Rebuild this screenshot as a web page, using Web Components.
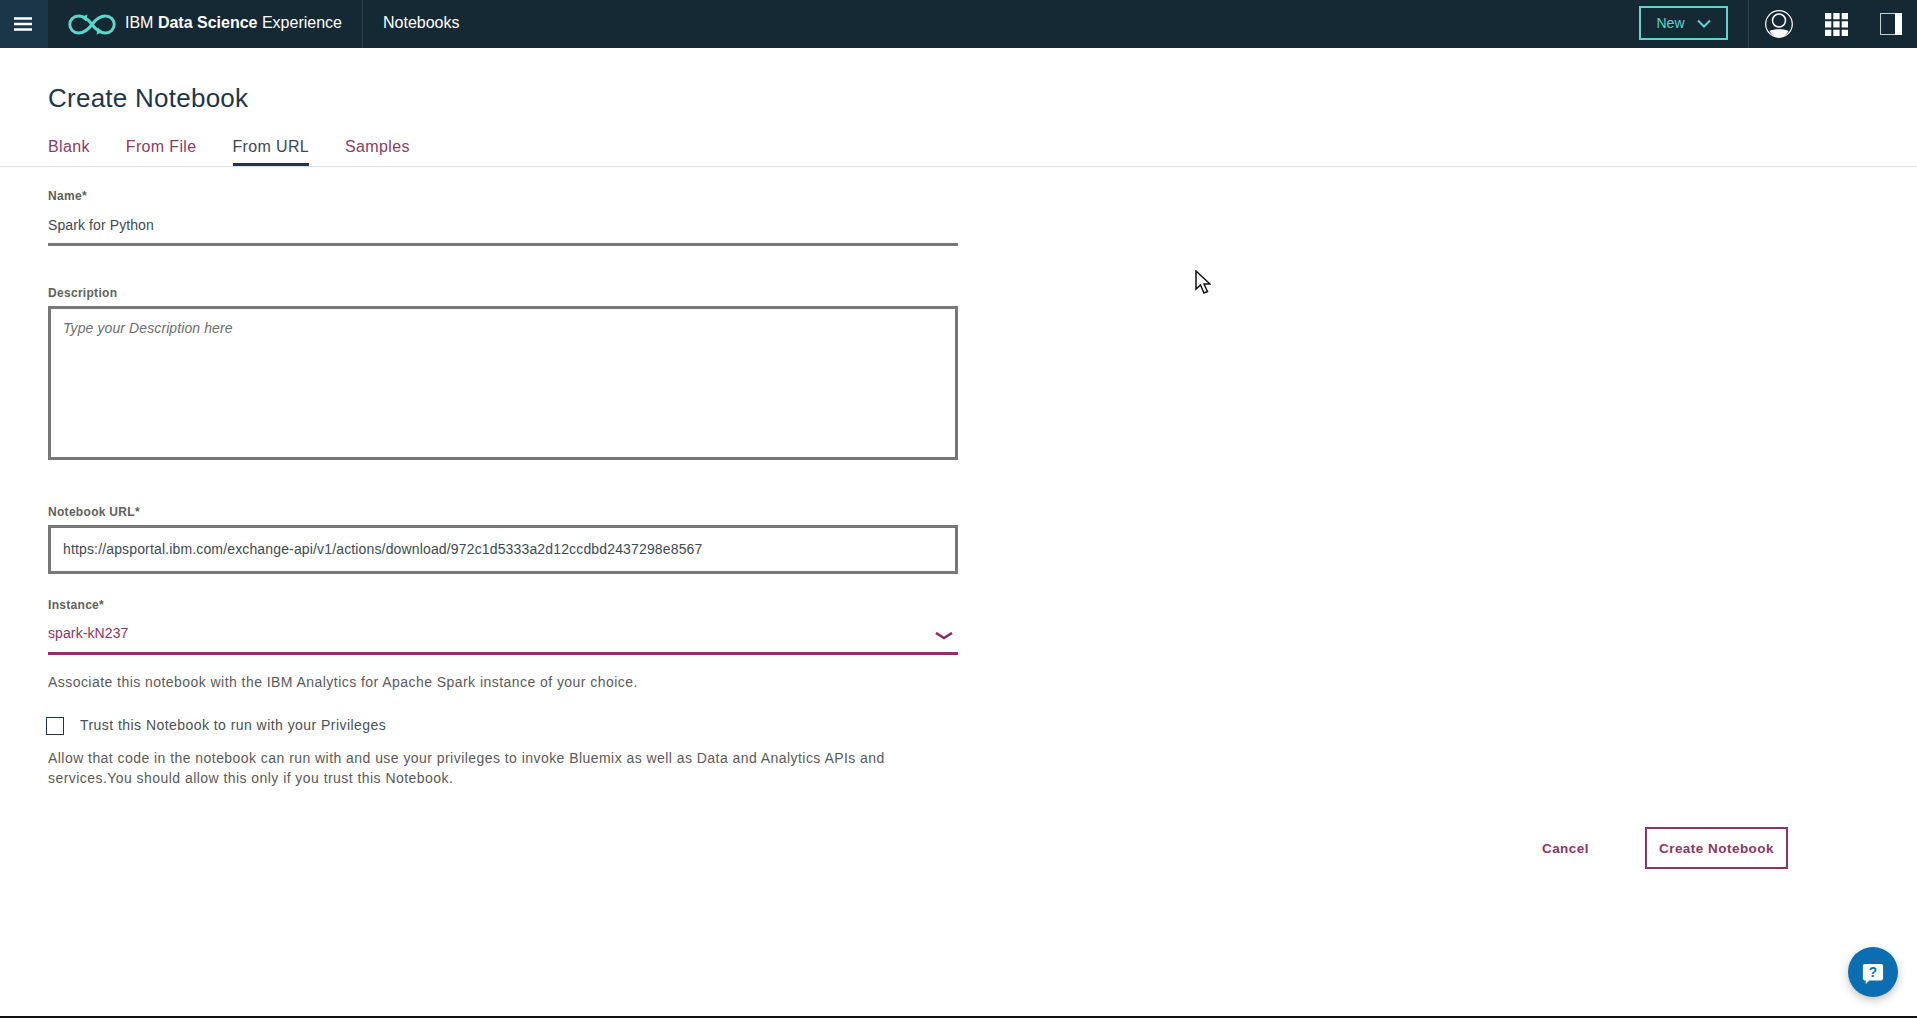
<!DOCTYPE html>
<html lang="en">
<head>
<meta charset="utf-8">
<title>Create Notebook</title>
<style>
  html, body { margin: 0; height: 100%; }
  body {
    display: flex;
    flex-direction: column;
    height: 1018px;
    overflow: hidden;
    background: #fff;
    font-family: "Liberation Sans", Arial, sans-serif;
    color: #5a5a5a;
  }
  dsx-page { flex: 1; }
</style>
</head>
<body>
<dsx-header></dsx-header>
<dsx-page>
  <dsx-tabs title="Create Notebook"></dsx-tabs>
  <dsx-form></dsx-form>
</dsx-page>
<dsx-cursor></dsx-cursor>
<dsx-help></dsx-help>

<script>
(function(){

  class DsxHeader extends HTMLElement {
    constructor() {
      super();
      this.attachShadow({ mode: "open" }).innerHTML = `
      <style>
        :host { display: flex; align-items: stretch; height: 48px; flex: none; background: #152935; color: #fff; font-size: 16px; }
        .burger { width: 48px; box-sizing: border-box; padding: 0 2px 1px 0; background: #1c3649; display: flex; align-items: center; justify-content: center; }
        .brand { display: flex; align-items: center; gap: 9px; padding: 0 0 0 20px; border-right: 1px solid #2b3f4b; width: 315px; box-sizing: border-box; }
        .brand svg { flex: none; }
        .brand span { white-space: nowrap; font-size: 16px; padding-bottom: 2px; }
        .section { display: flex; align-items: center; padding: 0 0 2px 20px; flex: 1; font-size: 16px; }
        .new { align-self: flex-start; margin-top: 6px; width: 89px; height: 34px; box-sizing: border-box; border: 2px solid #5dd5c8; color: #5dd5c8; display: flex; align-items: center; justify-content: center; gap: 12px; font-size: 14px; }
        .tools { display: flex; align-items: center; margin-left: 20px; border-left: 1px solid #2b3f4b; padding-left: 16px; width: 169px; box-sizing: border-box; gap: 32px; }
        .tools svg { flex: none; }
      </style>
      <div class="burger">
        <svg width="18" height="14" viewBox="0 0 18 14"><path d="M0 1.500h18M0 7h18M0 12.500h18" stroke="#fff" stroke-width="2.600"/></svg>
      </div>
      <div class="brand">
        <svg width="48" height="21" viewBox="0 0 48 21" fill="none" stroke="#5dd5c8" stroke-width="3">
          <path d="M24 10.500C20 5 16 2 10.500 2 5.500 2 1.800 5.800 1.800 10.500S5.500 19 10.500 19C16 19 20 16 24 10.500 28 5 32 2 37.500 2 42.500 2 46.200 5.800 46.200 10.500S42.500 19 37.500 19C32 19 28 16 24 10.500z"/>
          <path d="M13 3 19.500 .5 18 7.500zM35 18 28.500 20.500 30 13.500z" fill="#5dd5c8" stroke="none"/>
        </svg>
        <span>IBM <b>Data Science</b> Experience</span>
      </div>
      <div class="section">Notebooks</div>
      <div class="new">New
        <svg width="14" height="9" viewBox="0 0 14 9" fill="none" stroke="#5dd5c8" stroke-width="2"><path d="M1 1.500 7 7.500l6-6"/></svg>
      </div>
      <div class="tools">
        <svg width="28" height="28" viewBox="0 0 28 28">
          <circle cx="14" cy="14" r="13.300" fill="none" stroke="#fff" stroke-width="1.200"/>
          <path d="M4.500 21C8 18.500 20 18.500 23.500 21 21 25.500 17.500 27.300 14 27.300S7 25.500 4.500 21z" fill="#fff"/>
          <circle cx="14" cy="10.500" r="6.500" fill="none" stroke="#fff" stroke-width="1.500"/>
        </svg>
        <svg width="23" height="23" viewBox="0 0 23 23" fill="#fff">
          <path d="M0 0h6.300v6.300H0zM8.300 0h6.300v6.300H8.300zM16.700 0H23v6.300h-6.300zM0 8.300h6.300v6.300H0zM8.300 8.300h6.300v6.300H8.300zM16.700 8.300H23v6.300h-6.300zM0 16.700h6.300V23H0zM8.300 16.700h6.300V23H8.300zM16.700 16.700H23V23h-6.300z"/>
        </svg>
        <svg width="22" height="22" viewBox="0 0 22 22">
          <rect x=".5" y=".5" width="21" height="21" fill="none" stroke="#c8cdd0"/>
          <rect x="15" y="0" width="7" height="22" fill="#fff"/>
        </svg>
      </div>`;
    }
  }

  class DsxTabs extends HTMLElement {
    constructor() {
      super();
      this.attachShadow({ mode: "open" }).innerHTML = `
      <style>
        :host { display: block; padding-top: 34px; border-bottom: 1px solid #dfdfdf; }
        h1 { margin: 0 0 0 48px; font-weight: 400; font-size: 26px; line-height: 32px; letter-spacing: .25px; color: #1d3649; }
        nav { display: flex; gap: 36px; margin: 23px 0 0 48px; font-size: 16px; letter-spacing: .35px; }
        a { color: #8c3a68; line-height: 20px; padding-bottom: 6px; height: 20px; }
        a.on { color: #3a4a55; border-bottom: 3px solid #1d3649; }
      </style>
      <h1></h1>
      <nav>
        <a>Blank</a>
        <a>From File</a>
        <a class="on">From URL</a>
        <a>Samples</a>
      </nav>`;
      this.shadowRoot.querySelector("h1").textContent = this.getAttribute("title");
    }
  }

  class DsxField extends HTMLElement {
    constructor() {
      super();
      this.attachShadow({ mode: "open" }).innerHTML = `
      <style>
        :host { display: block; width: 910px; }
        label { display: block; font-size: 12px; line-height: 14px; font-weight: 700; letter-spacing: .3px; color: #5f5f5f; }
        .box { font-size: 14px; letter-spacing: .1px; color: #3d4a53; box-sizing: border-box; }
        :host([kind="line"]) .box { border-bottom: 3px solid #777; height: 38px; line-height: 34px; margin-top: 5px; }
        :host([kind="area"]) .box { border: 3px solid #777; height: 154px; margin-top: 6px; padding: 11px 12px; font-style: italic; color: #6e6e6e; line-height: 16px; }
        :host([kind="input"]) .box { border: 3px solid #777; height: 49px; margin-top: 6px; padding: 0 12px; line-height: 43px; letter-spacing: .15px; }
        :host([kind="select"]) .box { border-bottom: 3px solid #9b2a6a; height: 39px; margin-top: 4px; padding-bottom: 2px; color: #8c3566; display: flex; justify-content: space-between; align-items: center; }
        ::slotted(svg) { margin: 6px 5px 0 0; }
      </style>
      <label></label>
      <div class="box"><slot></slot></div>`;
      this.shadowRoot.querySelector("label").textContent = this.getAttribute("label");
    }
  }

  class DsxForm extends HTMLElement {
    constructor() {
      super();
      this.attachShadow({ mode: "open" }).innerHTML = `
      <style>
        :host { display: block; padding: 22px 48px 0; }
        .name { margin-bottom: 40px; }
        .desc { margin-bottom: 45px; }
        .url { margin-bottom: 24px; }
        p { margin: 0; font-size: 14px; letter-spacing: .45px; color: #5a5a5a; line-height: 20px; }
        .assoc { margin-top: 17px; }
        .trust { display: flex; align-items: center; gap: 16px; margin-top: 22px; height: 24px; font-size: 14px; letter-spacing: .45px; color: #4a4f53; }
        .trust span:last-child { margin-top: -3px; }
        .check { width: 18px; height: 18px; box-sizing: border-box; border: 1px solid #1d3649; margin-left: -2px; flex: none; }
        .allow { width: 860px; margin-top: 10px; }
        .actions { display: flex; justify-content: flex-end; align-items: center; gap: 56px; margin: 39px 81px 0 0; font-size: 13.500px; font-weight: 700; letter-spacing: .47px; color: #8c3566; }
        .primary { width: 143px; height: 42px; box-sizing: border-box; border: 2px solid #8c3566; display: flex; align-items: center; justify-content: center; }
      </style>
      <dsx-field class="name" kind="line" label="Name*">Spark for Python</dsx-field>
      <dsx-field class="desc" kind="area" label="Description">Type your Description here</dsx-field>
      <dsx-field class="url" kind="input" label="Notebook URL*">https://apsportal.ibm.com/exchange-api/v1/actions/download/972c1d5333a2d12ccdbd2437298e8567</dsx-field>
      <dsx-field kind="select" label="Instance*">spark-kN237<svg width="18" height="8" viewBox="0 0 18 8" fill="none" stroke="#8c2a66" stroke-width="2.600"><path d="M1 1l8 5 8-5"/></svg></dsx-field>
      <p class="assoc">Associate this notebook with the IBM Analytics for Apache Spark instance of your choice.</p>
      <div class="trust"><span class="check"></span><span>Trust this Notebook to run with your Privileges</span></div>
      <p class="allow">Allow that code in the notebook can run with and use your privileges to invoke Bluemix as well as Data and Analytics APIs and services.You should allow this only if you trust this Notebook.</p>
      <div class="actions"><span>Cancel</span><span class="primary">Create Notebook</span></div>`;
    }
  }

  class DsxCursor extends HTMLElement {
    constructor() {
      super();
      this.attachShadow({ mode: "open" }).innerHTML = `
      <style>
        :host { position: absolute; left: 1195px; top: 270px; width: 16px; height: 25px; }
      </style>
      <svg width="16" height="25" viewBox="0 0 16 25">
        <path d="M1 1v18l4.500-4 3.500 8 3.500-1.500L9 14h6z" fill="#fff" stroke="#111" stroke-width="1.500" stroke-linejoin="miter"/>
      </svg>`;
    }
  }

  class DsxHelp extends HTMLElement {
    constructor() {
      super();
      this.attachShadow({ mode: "open" }).innerHTML = `
      <style>
        :host { position: absolute; left: 1848px; top: 947px; width: 50px; height: 50px; border-radius: 50%; background: #0a6eb0; box-shadow: 0 3px 8px rgba(0,0,0,.25); display: flex; align-items: center; justify-content: center; }
        svg { display: block; margin-top: 3px; }
        text { font: 700 15px "Liberation Sans", sans-serif; fill: #0a6eb0; }
      </style>
      <svg width="22" height="22" viewBox="0 0 24 24">
        <path d="M3 1h18a2 2 0 0 1 2 2v14a2 2 0 0 1-2 2H8l-4 4v-4H3a2 2 0 0 1-2-2V3a2 2 0 0 1 2-2z" fill="#fff"/>
        <text x="12" y="15" text-anchor="middle">?</text>
      </svg>`;
    }
  }

  class DsxPage extends HTMLElement {
    constructor() {
      super();
      this.attachShadow({ mode: "open" }).innerHTML = `
      <style>
        :host { display: block; border-bottom: 2px solid #111; }
      </style>
      <slot></slot>`;
    }
  }

  customElements.define("dsx-header", DsxHeader);
  customElements.define("dsx-tabs", DsxTabs);
  customElements.define("dsx-field", DsxField);
  customElements.define("dsx-form", DsxForm);
  customElements.define("dsx-cursor", DsxCursor);
  customElements.define("dsx-help", DsxHelp);
  customElements.define("dsx-page", DsxPage);

})();
</script>
</body>
</html>
